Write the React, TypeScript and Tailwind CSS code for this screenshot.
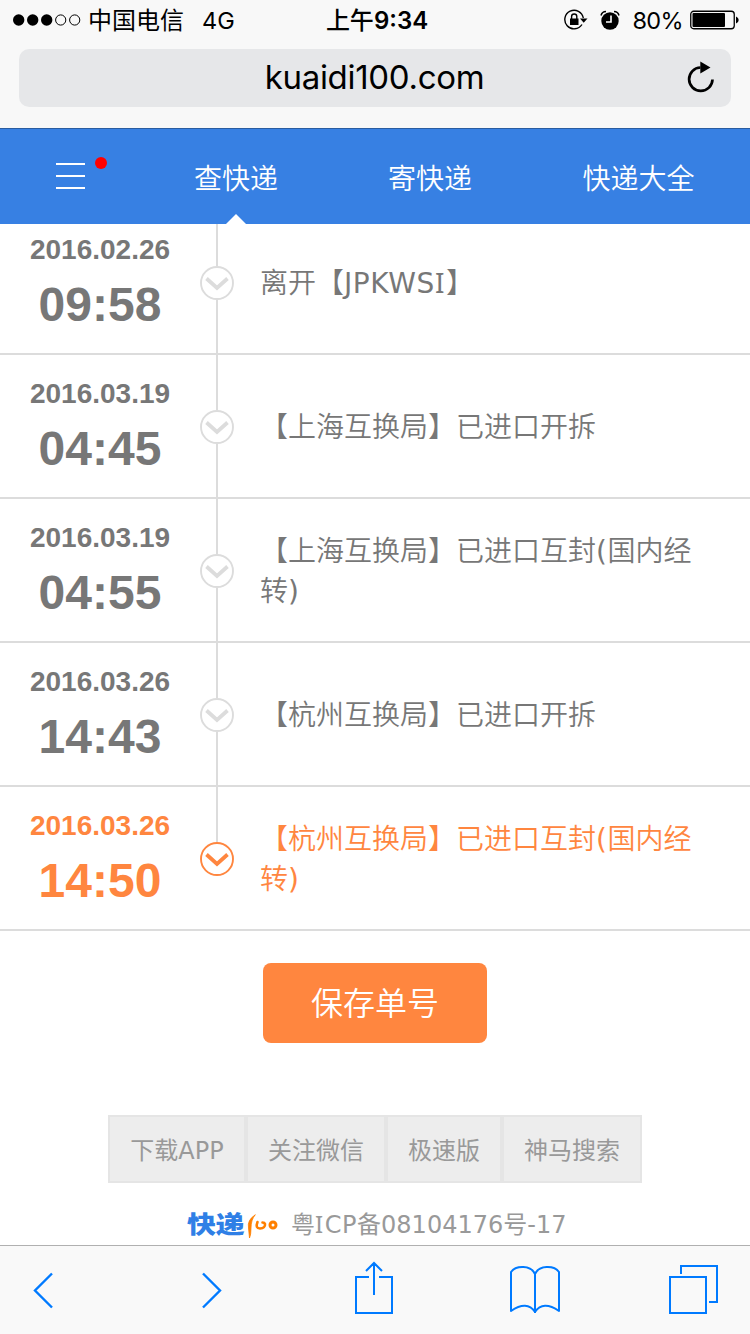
import React from 'react';
import clsx from 'clsx';

const records = [
  { date: '2016.02.26', time: '09:58', text: '离开【JPKWSI】' },
  { date: '2016.03.19', time: '04:45', text: '【上海互换局】已进口开拆' },
  { date: '2016.03.19', time: '04:55', text: '【上海互换局】已进口互封(国内经转)' },
  { date: '2016.03.26', time: '14:43', text: '【杭州互换局】已进口开拆' },
  { date: '2016.03.26', time: '14:50', text: '【杭州互换局】已进口互封(国内经转)' },
];

const footerLinks = [
  { label: '下载APP', width: 'w-[138px]' },
  { label: '关注微信', width: 'w-[140px]' },
  { label: '极速版', width: 'w-[116px]' },
  { label: '神马搜索', width: 'w-[140px]' },
];

// Splits out latin runs so they can be tracked wider than the Chinese text
function MixedText({ text }: { text: string }) {
  return (
    <>
      {text.split(/([A-Z()]+)/).map((part, i) =>
        /^[A-Z()]+$/.test(part) ? (
          <span key={i} className="font-normal tracking-[0.6px]">
            {part.split(/(I)/).map((c, j) =>
              c === 'I' ? (
                <span key={j} className="font-['Noto_Sans'] leading-none tracking-[1.5px]">I</span>
              ) : (
                c
              ),
            )}
          </span>
        ) : (
          part
        ),
      )}
    </>
  );
}

function StatusBar() {
  return (
    <div className="flex h-10 items-center pr-[11px] pl-[13px] font-['Inter','Noto_Sans_CJK_SC',sans-serif] text-2xl leading-10 text-black">
      <div className="flex flex-1 items-center">
        <svg width="68" height="12" viewBox="0 0 68 12">
          <circle cx="5.7" cy="6" r="5.7" />
          <circle cx="19.7" cy="6" r="5.7" />
          <circle cx="33.7" cy="6" r="5.7" />
          <circle cx="47.7" cy="6" r="5.1" fill="none" stroke="#000" />
          <circle cx="61.7" cy="6" r="5.1" fill="none" stroke="#000" />
        </svg>
        <span className="ml-[7px] pt-0.5">中国电信</span>
        <span className="ml-[18px] pt-0.5 text-[23.5px]">4G</span>
      </div>
      <div className="pt-0.5 pl-0.5 font-semibold"><span className="font-medium">上午</span>9:34</div>
      <div className="flex flex-1 items-center justify-end">
        <svg width="24" height="22" viewBox="0 0 24 22" fill="none" stroke="#000" strokeWidth="1.4">
          <path d="M18 15.5A9.3 9.3 0 1 1 19.3 9" />
          <path d="M16 9.5h7.5l-3.8 4.2z" fill="#000" stroke="none" />
          <rect x="6" y="9.5" width="8.5" height="6.5" fill="#000" stroke="none" />
          <path d="M7.6 10V7.6a2.6 2.6 0 0 1 5.2 0V10" />
        </svg>
        <svg className="ml-[12px]" width="20" height="20" viewBox="0 0 20 20">
          <circle cx="10" cy="11" r="8.7" />
          <path d="M1 5.5Q2 1.5 6 1.5M14 1.5q4 0 5 4" fill="none" stroke="#000" strokeWidth="1.5" />
          <path d="M11 5.5V12H6" fill="none" stroke="#fff" strokeWidth="1.6" />
        </svg>
        <span className="ml-[12px] pt-0.5 text-[23.5px] tracking-[-0.6px]">80%</span>
        <svg className="ml-[7px]" width="49" height="20" viewBox="0 0 49 20">
          <rect x=".75" y="1.25" width="43.5" height="17.5" rx="3" fill="none" stroke="#000" strokeWidth="1.3" />
          <rect x="2.5" y="3" width="32.5" height="14" rx="1" />
          <path d="M46 6.5q2.7 1 2.7 3.5t-2.7 3.5z" />
        </svg>
      </div>
    </div>
  );
}

function AddressBar() {
  return (
    <div className="mx-[19px] mt-[9px] flex h-[58px] items-center rounded-[10px] bg-[#e6e7e9] text-black">
      <div className="w-[44px]" />
      <div className="flex-1 pb-0.5 text-center font-['Inter',sans-serif] text-[33px] leading-[56px] tracking-[-0.3px]">
        kuaidi100.com
      </div>
      <svg className="mr-[16px] mb-0.5" width="29" height="32" viewBox="0 0 29 32">
        <path d="M26.5 18.5A11.7 11.7 0 1 1 14.5 6.5" fill="none" stroke="#000" strokeWidth="2.7" />
        <path d="M14.3 0.5L24.5 6.5 14.3 12.5z" />
      </svg>
    </div>
  );
}

function NavBar() {
  return (
    <nav className="flex h-24 border-t border-[#2a5ca0] bg-[#3780e3] text-[28px] leading-[102px] font-[350] text-white">
      <div className="w-[139px] pt-[27px] pl-14">
        <svg width="52" height="36" viewBox="0 0 52 36">
          <path d="M0 8h29M0 20h29M0 32h29" stroke="#fff" strokeWidth="2" />
          <circle cx="45" cy="7" r="6" fill="#f00" />
        </svg>
      </div>
      <div className="relative w-[194px] text-center">
        查快递
        <svg className="absolute bottom-0 left-[87px]" width="20" height="10" viewBox="0 0 20 10">
          <path d="M0 10L10 0l10 10z" fill="#fff" />
        </svg>
      </div>
      <div className="w-[194px] text-center">寄快递</div>
      <div className="flex-1 text-center">快递大全</div>
    </nav>
  );
}

function RecordRow({ record, last }: { record: (typeof records)[number]; last: boolean }) {
  return (
    <li
      className={clsx(
        'flex h-36 shrink-0 border-b-2 border-[#dcdcdc]',
        last ? 'text-[#ff863f]' : 'text-[#777]',
      )}
    >
      <div className="w-[200px] pt-[23px] text-center font-['Liberation_Sans',sans-serif] font-bold">
        <div className="text-[28px] leading-8">{record.date}</div>
        <div className="mt-[11px] text-5xl leading-[56px]">{record.time}</div>
      </div>
      <div className="flex w-[34px] flex-col items-center">
        <div className="h-[55px] w-0.5 bg-[#dcdcdc]" />
        <svg className="shrink-0" width="34" height="34" viewBox="0 0 34 34" fill="none">
          <circle cx="17" cy="17" r="16" stroke={last ? '#ff863f' : '#dcdcdc'} strokeWidth="1.9" />
          <path d="M6.5 12.5L17 22 27.5 12.5" stroke={last ? '#ff863f' : '#dcdcdc'} strokeWidth="3.8" />
        </svg>
        {/* runs over the row border so the line stays continuous */}
        {!last && <div className="-mb-0.5 w-0.5 flex-1 bg-[#dcdcdc]" />}
      </div>
      <div className="flex flex-1 items-center pt-1 pr-[50px] pl-[26px] text-[28px] leading-10 font-[350]">
        <p><MixedText text={record.text} /></p>
      </div>
    </li>
  );
}

function PageFooter() {
  return (
    <footer className="mt-[72px] text-2xl text-[#999]">
      <div className="flex justify-center">
        {footerLinks.map((link) => (
          <a
            key={link.label}
            className={clsx(
              'h-[68px] border-2 border-[#e5e5e5] bg-[#ededed] text-center leading-[69px] whitespace-nowrap',
              link.width,
            )}
          >
            {link.label}
          </a>
        ))}
      </div>
      <div className="mt-[24px] flex h-9 items-center pl-[187px] leading-9 whitespace-nowrap">
        <span className="w-[60px] scale-y-[0.82] text-[29px] font-black tracking-[-0.5px] text-[#2f7fe6]">
          快递
        </span>
        <svg width="32" height="28" viewBox="0 0 32 28" fill="none" stroke="#ff8000" strokeLinecap="round">
          <path d="M8 4Q0 9 1.5 17L2.5 27Q4 24 4 17Q4 9 8 4z" fill="#ff8000" strokeWidth="0.8" />
          <path d="M10.5 11q-2.5 6.500 2.500 6.500q5.500-.5 5-4.500q-.5-1.500-2.500-1.500" strokeWidth="2.6" />
          <circle cx="26" cy="14" r="3" strokeWidth="3" />
        </svg>
        <span className="ml-[12px]"><MixedText text="粤ICP备08104176号-17" /></span>
      </div>
    </footer>
  );
}

function Toolbar() {
  return (
    <div className="flex h-[89px] items-start border-t border-[#b0b0b0] bg-[#f9f9f9] pl-[33px]">
      <svg className="mt-[26px]" width="22" height="38" viewBox="0 0 22 38" fill="none" stroke="#007aff" strokeWidth="2.4">
        <path d="M19 1.5L2 18.5l17 17" />
      </svg>
      <svg className="mt-[26px] ml-[146px]" width="22" height="38" viewBox="0 0 22 38" fill="none" stroke="#007aff" strokeWidth="2.4">
        <path d="M2 1.5l17 17-17 17" />
      </svg>
      <svg className="mt-[15px] ml-[132px]" width="38" height="54" viewBox="0 0 38 54" fill="none" stroke="#007aff" strokeWidth="2">
        <path d="M14 16H1v36h36V16H24M19 34V2M11 10l8-8 8 8" />
      </svg>
      <svg className="mt-[19px] ml-[117px]" width="50" height="50" viewBox="0 0 50 50" fill="none" stroke="#007aff" strokeWidth="2" strokeLinejoin="round">
        <path d="M25 9C21 0 6 0 1 7v39q16-11 24 1q8-12 24-1V7C44 0 29 0 25 9z" />
        <path d="M25 9v39" />
      </svg>
      <svg className="mt-[19px] ml-[109px]" width="50" height="50" viewBox="0 0 50 50" fill="none" stroke="#007aff" strokeWidth="2">
        <path d="M1 12h36v36H1zM12 9V1h36v36h-8" />
      </svg>
    </div>
  );
}

export default function App() {
  return (
    <div className="flex h-[1334px] w-[750px] flex-col overflow-hidden bg-white font-['DejaVu_Sans','Noto_Sans_CJK_SC',sans-serif]">
      <header className="h-32 shrink-0 bg-[#f8f8f8]">
        <StatusBar />
        <AddressBar />
      </header>
      <NavBar />
      <main className="min-h-0 flex-1 overflow-hidden">
        {/* list is scrolled, the first row is partly under the nav */}
        <ul className="flex h-[707px] flex-col justify-end overflow-hidden">
          {records.map((record, i) => (
            <RecordRow key={i} record={record} last={i === records.length - 1} />
          ))}
        </ul>
        <button className="mx-auto mt-8 block h-20 w-56 rounded-lg bg-[#ff863f] text-[32px] leading-[82px] font-[350] text-white">
          保存单号
        </button>
        <PageFooter />
      </main>
      <Toolbar />
    </div>
  );
}
